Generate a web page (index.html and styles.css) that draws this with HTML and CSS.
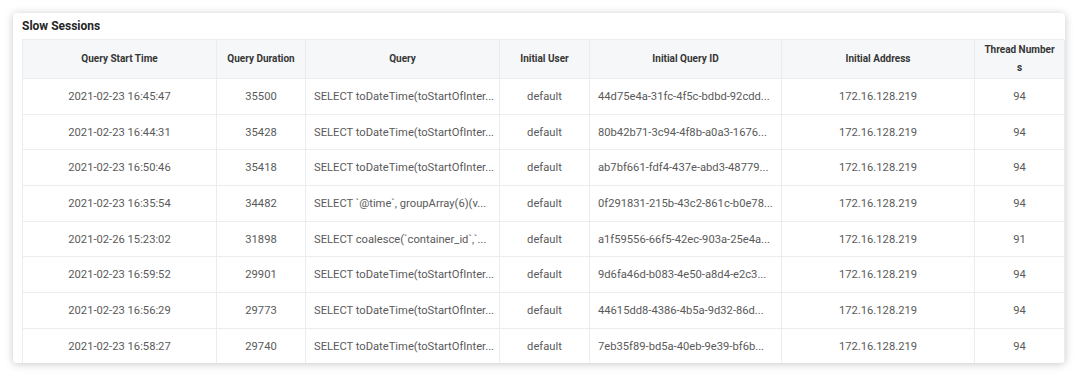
FILE: index.html
```html
<!DOCTYPE html>
<html lang="en">
<head>
<meta charset="utf-8">
<title>Slow Sessions</title>
<link rel="stylesheet" href="styles.css">
</head>
<body>
<div class="card">
  <div class="title">Slow Sessions</div>
  <div class="grid">
    <div class="th">Query Start Time</div>
    <div class="th">Query Duration</div>
    <div class="th">Query</div>
    <div class="th">Initial User</div>
    <div class="th">Initial Query ID</div>
    <div class="th">Initial Address</div>
    <div class="th wrap">Thread Numbers</div>

    <div class="td">2021-02-23 16:45:47</div><div class="td">35500</div><div class="td left">SELECT toDateTime(toStartOfInter...</div><div class="td">default</div><div class="td left">44d75e4a-31fc-4f5c-bdbd-92cdd...</div><div class="td">172.16.128.219</div><div class="td">94</div>
    <div class="td">2021-02-23 16:44:31</div><div class="td">35428</div><div class="td left">SELECT toDateTime(toStartOfInter...</div><div class="td">default</div><div class="td left">80b42b71-3c94-4f8b-a0a3-1676...</div><div class="td">172.16.128.219</div><div class="td">94</div>
    <div class="td">2021-02-23 16:50:46</div><div class="td">35418</div><div class="td left">SELECT toDateTime(toStartOfInter...</div><div class="td">default</div><div class="td left">ab7bf661-fdf4-437e-abd3-48779...</div><div class="td">172.16.128.219</div><div class="td">94</div>
    <div class="td">2021-02-23 16:35:54</div><div class="td">34482</div><div class="td left">SELECT `@time`, groupArray(6)(v...</div><div class="td">default</div><div class="td left">0f291831-215b-43c2-861c-b0e78...</div><div class="td">172.16.128.219</div><div class="td">94</div>
    <div class="td">2021-02-26 15:23:02</div><div class="td">31898</div><div class="td left">SELECT coalesce(`container_id`,`...</div><div class="td">default</div><div class="td left">a1f59556-66f5-42ec-903a-25e4a...</div><div class="td">172.16.128.219</div><div class="td">91</div>
    <div class="td">2021-02-23 16:59:52</div><div class="td">29901</div><div class="td left">SELECT toDateTime(toStartOfInter...</div><div class="td">default</div><div class="td left">9d6fa46d-b083-4e50-a8d4-e2c3...</div><div class="td">172.16.128.219</div><div class="td">94</div>
    <div class="td">2021-02-23 16:56:29</div><div class="td">29773</div><div class="td left">SELECT toDateTime(toStartOfInter...</div><div class="td">default</div><div class="td left">44615dd8-4386-4b5a-9d32-86d...</div><div class="td">172.16.128.219</div><div class="td">94</div>
    <div class="td">2021-02-23 16:58:27</div><div class="td">29740</div><div class="td left">SELECT toDateTime(toStartOfInter...</div><div class="td">default</div><div class="td left">7eb35f89-bd5a-40eb-9e39-bf6b...</div><div class="td">172.16.128.219</div><div class="td">94</div>
  </div>
</div>
</body>
</html>
```
FILE: styles.css
```css
html, body {
  margin: 0;
  padding: 0;
  background: #ffffff;
}
body {
  padding: 13px 15px 15px 13px;
  font-family: Roboto, "Liberation Sans", Arial, sans-serif;
}
.card {
  width: 1052px;
  height: 350px;
  box-sizing: border-box;
  background: #ffffff;
  border-radius: 4px;
  box-shadow: 0 1px 9px rgba(0, 0, 0, 0.22);
  overflow: hidden;
  padding-left: 9px;
}
.title {
  height: 26px;
  line-height: 26px;
  font-size: 12px;
  font-weight: 700;
  color: #262626;
}
.grid {
  display: grid;
  grid-template-columns: 194px 89px 194px 90px 192px 193px 90px;
  grid-template-rows: 39px repeat(8, 35.7px);
  width: 1042px;
  border-top: 1px solid #eaecef;
  border-left: 1px solid #eaecef;
  box-sizing: border-box;
}
.th, .td {
  border-right: 1px solid #eaecef;
  border-bottom: 1px solid #eaecef;
  display: flex;
  align-items: center;
  justify-content: center;
  text-align: center;
  white-space: nowrap;
  overflow: hidden;
  min-width: 0;
}
.th {
  background: #f6f7f9;
  font-size: 10px;
  font-weight: 700;
  color: #363636;
  line-height: 18px;
  padding: 0 8px;
}
.th.wrap {
  white-space: normal;
  word-break: break-all;
  padding: 0 8px;
}
.td {
  font-size: 11.2px;
  color: #5a5a5a;
  padding: 0 8px;
}
.td.left {
  justify-content: flex-start;
  text-align: left;
}
```
